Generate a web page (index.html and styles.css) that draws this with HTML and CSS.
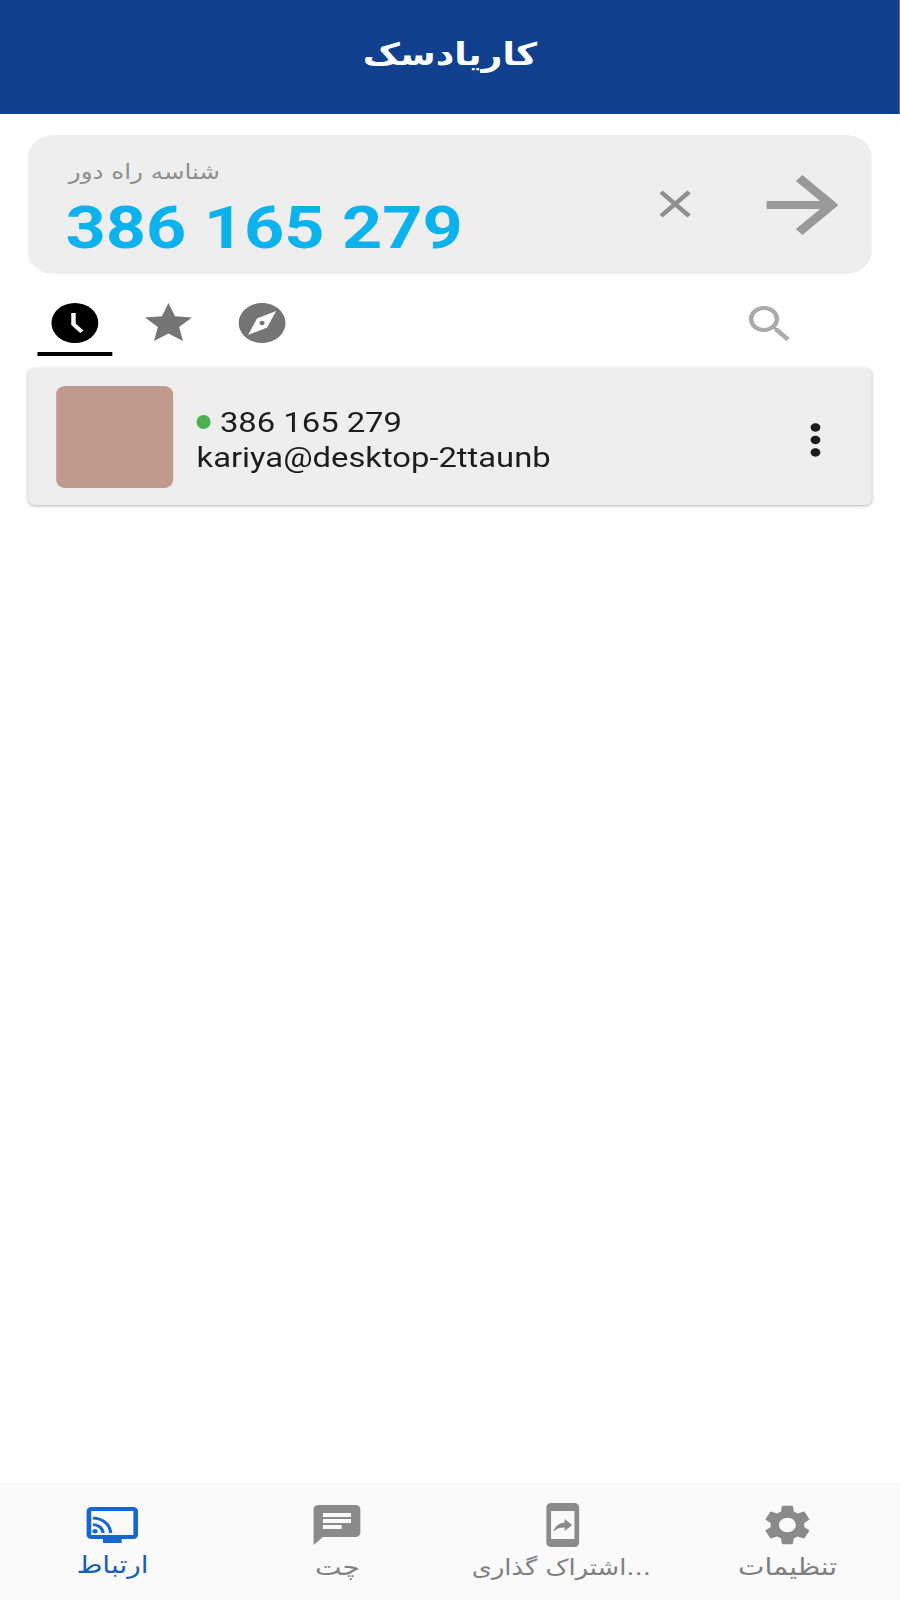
FILE: index.html
```html
<!DOCTYPE html>
<html lang="fa">
<head>
  <meta charset="UTF-8" />
  <meta name="viewport" content="width=device-width, initial-scale=1" />
  <title>کاریادسک</title>
  <link rel="stylesheet" href="styles.css">
</head>
<body>
  <div class="app">
    <header class="top-bar">
      <h1 dir="rtl">کاریادسک</h1>
    </header>

    <!-- remote id box -->
    <section class="id-box" dir="ltr">
      <div class="id-text">
        <div class="id-label" dir="rtl">شناسه راه دور</div>
        <div class="id-number">386 165 279</div>
      </div>
      <svg class="id-clear" viewBox="0 0 28 28"><path d="M2 2l24 24M26 2L2 26"/></svg>
      <svg class="id-go" viewBox="0 0 61 60"><path d="M0 30h56M28 3l28 27-28 27"/></svg>
    </section>

    <!-- peer tabs -->
    <nav class="tabs">
      <div class="tab active">
        <svg class="ic" viewBox="0 0 24 24"><circle cx="12" cy="12" r="10" fill="#000"/><path d="M11.4 7v5.6l3.6 3.8" fill="none" stroke="#fff" stroke-width="1.9"/></svg>
      </div>
      <div class="tab">
        <svg class="ic gray" viewBox="0 0 24 24"><path d="M12 17.27L18.18 21l-1.64-7.03L22 9.24l-7.19-.61L12 2 9.19 8.63 2 9.24l5.46 4.73L5.82 21z"/></svg>
      </div>
      <div class="tab">
        <svg class="ic gray" viewBox="0 0 24 24"><path d="M12 10.9c-.61 0-1.1.49-1.1 1.1s.49 1.1 1.1 1.1c.61 0 1.1-.49 1.1-1.1s-.49-1.1-1.1-1.1zM12 2C6.48 2 2 6.48 2 12s4.48 10 10 10 10-4.48 10-10S17.52 2 12 2zm2.19 12.19L6 18l3.81-8.19L18 6l-3.81 8.19z"/></svg>
      </div>
      <svg class="ic search" viewBox="0 0 24 24"><path d="M15.5 14h-.79l-.28-.27C15.41 12.59 16 11.11 16 9.5 16 5.91 13.09 3 9.5 3S3 5.91 3 9.5 5.91 16 9.5 16c1.61 0 3.09-.59 4.23-1.57l.27.28v.79l5 4.99L20.49 19l-4.99-5zm-6 0C7.01 14 5 11.99 5 9.5S7.01 5 9.5 5 14 7.01 14 9.5 11.99 14 9.5 14z"/></svg>
    </nav>

    <!-- peer card -->
    <div class="peer">
      <div class="avatar"></div>
      <div class="peer-info">
        <div class="peer-id"><span class="dot"></span>386 165 279</div>
        <div class="peer-name">kariya@desktop-2ttaunb</div>
      </div>
      <svg class="ic more" viewBox="0 0 24 24"><path d="M12 8c1.1 0 2-.9 2-2s-.9-2-2-2-2 .9-2 2 .9 2 2 2zm0 2c-1.1 0-2 .9-2 2s.9 2 2 2 2-.9 2-2-.9-2-2-2zm0 6c-1.1 0-2 .9-2 2s.9 2 2 2 2-.9 2-2-.9-2-2-2z"/></svg>
    </div>

    <!-- bottom navigation -->
    <footer class="bottom-nav">
      <div class="nav-item selected">
        <svg class="ic" viewBox="0 0 24 24"><path d="M21 3H3c-1.1 0-2 .9-2 2v12c0 1.1.9 2 2 2h5v2h8v-2h5c1.1 0 1.99-.9 1.99-2L23 5c0-1.1-.9-2-2-2zm0 14H3V5h18v12z"/><circle cx="4.6" cy="15.1" r="1.1"/><path class="cast" d="M3.7 11.8a4.3 4.3 0 0 1 4.3 4.2M3.7 8.6a7.6 7.6 0 0 1 7.6 7.4"/></svg>
        <span dir="rtl">ارتباط</span>
      </div>
      <div class="nav-item">
        <svg class="ic" viewBox="0 0 24 24"><path d="M20 2H4c-1.1 0-1.99.9-1.99 2L2 22l4-4h14c1.1 0 2-.9 2-2V4c0-1.1-.9-2-2-2zM6 9h12v2H6V9zm8 5H6v-2h8v2zm4-6H6V6h12v2z"/></svg>
        <span dir="rtl">چت</span>
      </div>
      <div class="nav-item">
        <svg class="ic" viewBox="0 0 24 24"><path d="M17 1.01L7 1c-1.1 0-2 .9-2 2v18c0 1.1.9 2 2 2h10c1.1 0 2-.9 2-2V3c0-1.1-.9-1.99-2-1.99zM17 19H7V5h10v14zm-4.2-5.76v1.75L16 12l-3.2-2.98v1.7c-3.11.43-4.35 2.56-4.8 4.7 1.11-1.5 2.58-2.18 4.8-2.18z"/></svg>
        <span class="long-label" dir="rtl">...اشتراک گذاری</span>
      </div>
      <div class="nav-item">
        <svg class="ic" viewBox="0 0 24 24"><path d="M19.14 12.94c.04-.3.06-.61.06-.94 0-.32-.02-.64-.07-.94l2.03-1.58c.18-.14.23-.41.12-.61l-1.92-3.32c-.12-.22-.37-.29-.59-.22l-2.39.96c-.5-.38-1.03-.7-1.62-.94l-.36-2.54c-.04-.24-.24-.41-.48-.41h-3.84c-.24 0-.43.17-.47.41l-.36 2.54c-.59.24-1.13.57-1.62.94l-2.39-.96c-.22-.08-.47 0-.59.22L2.74 8.87c-.12.21-.08.47.12.61l2.03 1.58c-.05.3-.09.63-.09.94s.02.64.07.94l-2.03 1.58c-.18.14-.23.41-.12.61l1.92 3.32c.12.22.37.29.59.22l2.39-.96c.5.38 1.03.7 1.62.94l.36 2.54c.05.24.24.41.48.41h3.84c.24 0 .44-.17.47-.41l.36-2.54c.59-.24 1.13-.56 1.62-.94l2.39.96c.22.08.47 0 .59-.22l1.92-3.32c.12-.22.07-.47-.12-.61l-2.01-1.58zM12 15.6c-1.98 0-3.6-1.62-3.6-3.6s1.62-3.6 3.6-3.6 3.6 1.62 3.6 3.6-1.62 3.6-3.6 3.6z"/></svg>
        <span dir="rtl">تنظیمات</span>
      </div>
    </footer>
  </div>
</body>
</html>
```

FILE: styles.css
```css
html, body {
  margin: 0;
  height: 100%;
  overflow: hidden;
  background: #fff;
}
/* the whole screen is stretched sideways in the screenshot */
.app {
  width: calc(100vw / 1.17);
  height: 100vh;
  display: flex;
  flex-direction: column;
  font-family: Roboto, "DejaVu Sans", sans-serif;
  transform: scaleX(1.17);
  transform-origin: 0 0;
}
.ic {
  width: 48px;
  height: 48px;
  display: block;
  flex: none;
}

.top-bar {
  height: 114px;
  flex: none;
  background: #11408f;
  display: flex;
  align-items: center;
  justify-content: center;
}
.top-bar h1 {
  margin: 0 0 6px;
  color: #fff;
  font: bold 31px "DejaVu Sans", sans-serif;
}

.id-box {
  flex: none;
  height: 139px;
  margin: 21px 24px 0;
  padding: 0 29px 0 32px;
  box-sizing: border-box;
  background: #eeeeef;
  border-radius: 22px;
  display: flex;
  align-items: center;
}
.id-text {
  flex: 1;
  align-self: flex-start;
  padding-top: 25px;
}
.id-label {
  width: 132px;
  font: 21px/24px "DejaVu Sans", sans-serif;
  color: #8e8e8e;
  white-space: nowrap;
}
.id-number {
  margin-top: 11px;
  font-size: 60px;
  font-weight: bold;
  line-height: 66px;
  color: #0cb2ee;
  white-space: nowrap;
}
.id-clear {
  width: 28px;
  height: 28px;
  margin: 0 64px 2px 0;
  fill: none;
  stroke: #8f8f8f;
  stroke-width: 4;
}
.id-go {
  width: 61px;
  height: 60px;
  fill: none;
  stroke: #999;
  stroke-width: 8;
}

.tabs {
  flex: none;
  display: flex;
  gap: 16px;
  padding: 25px 87px 0 32px;
}
.tab {
  width: 64px;
  height: 57px;
  display: flex;
  justify-content: center;
  box-sizing: border-box;
}
.tab.active {
  border-bottom: 4px solid #000;
}
.gray {
  fill: #757575;
}
.search {
  margin: 1px 0 0 auto;
  fill: #ababab;
}

.peer {
  flex: none;
  height: 137px;
  margin: 12px 24px 0;
  padding-left: 24px;
  box-sizing: border-box;
  background: #eeeeef;
  border-radius: 6px;
  box-shadow: 0 1px 3px rgba(0, 0, 0, 0.3);
  display: flex;
  align-items: center;
}
.avatar {
  width: 100px;
  height: 102px;
  background: #c09a8e;
  border-radius: 8px;
  flex: none;
}
.peer-info {
  flex: 1;
  margin: 6px 0 0 20px;
  color: #1c1c1c;
  font-size: 28px;
  line-height: 35px;
}
.peer-id {
  display: flex;
  align-items: center;
}
.dot {
  width: 12px;
  height: 14px;
  margin: 0 8px 0 0;
  border-radius: 50%;
  background: #4caf50;
}
.more {
  width: 50px;
  height: 50px;
  margin: 7px 23px 0 0;
  fill: #1c1c1c;
}

.bottom-nav {
  margin-top: auto;
  height: 118px;
  flex: none;
  background: #fafafa;
  display: grid;
  grid-template-columns: repeat(4, 1fr);
}
.nav-item {
  padding-top: 19px;
  box-sizing: border-box;
  display: flex;
  flex-direction: column;
  align-items: center;
  color: #7f7f7f;
  fill: #8a8a8a;
  font: 24px "DejaVu Sans", sans-serif;
  white-space: nowrap;
}
.nav-item span {
  margin-top: 4px;
}
.nav-item .long-label {
  margin: 6px 2px 0 0;
  font-size: 22px;
}
.nav-item.selected {
  color: #1a5fb4;
  fill: #1668d0;
}
.nav-item.selected span {
  margin-top: 2px;
}
.cast {
  fill: none;
  stroke: #1668d0;
  stroke-width: 1.4;
}
```
